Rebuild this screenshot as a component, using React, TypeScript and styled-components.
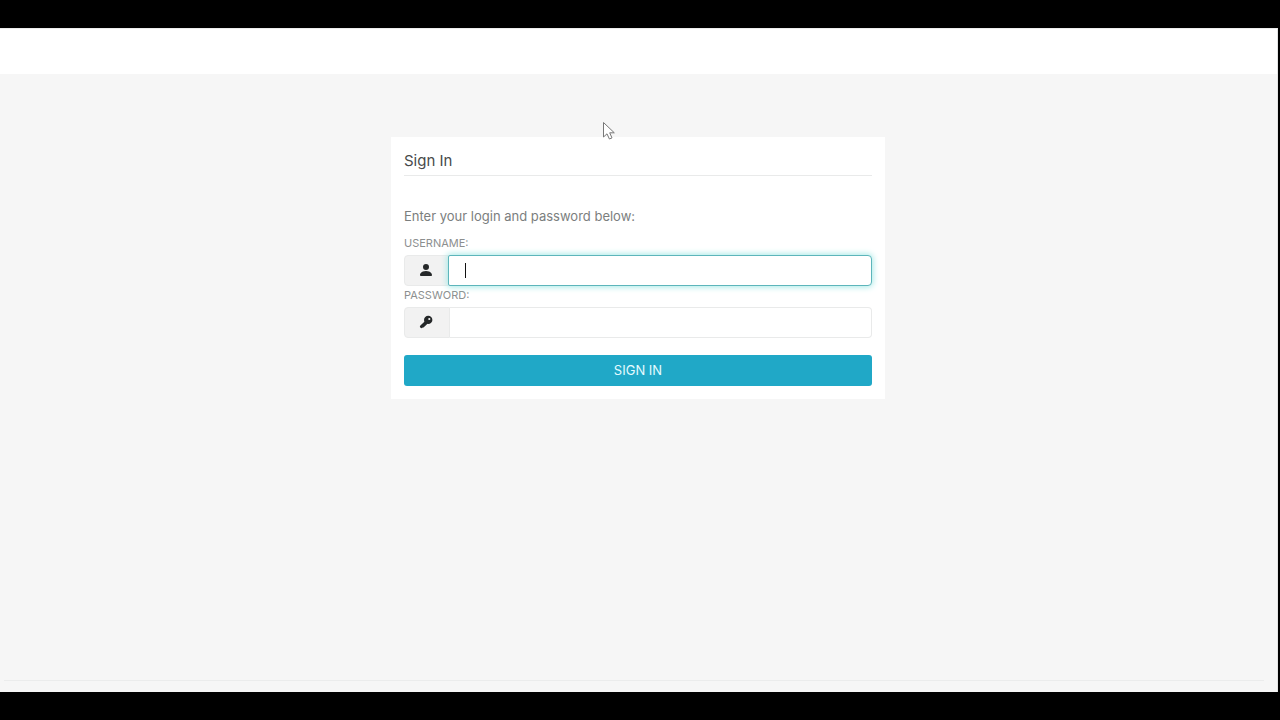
import React from "react";
import styled, { createGlobalStyle } from "styled-components";
import { BsPersonFill } from "react-icons/bs";

const GlobalStyle = createGlobalStyle`
  *, *::before, *::after { box-sizing: border-box; }
  body {
    margin: 0;
    background: #000;
    font-family: Inter, "Liberation Sans", sans-serif;
  }
`;

const Frame = styled.div`
  display: flex;
  flex-direction: column;
  min-height: 100vh;
  padding: 28px 2px 28px 0;
  background: #000;
`;

const Page = styled.div`
  flex: 1;
  display: flex;
  flex-direction: column;
  background: #f6f6f6;
  border-right: 1px solid #e4e5e5;
`;

const Header = styled.header`
  height: 46px;
  background: #fff;
  border-top: 1px solid #ececec;
`;

const Main = styled.main`
  flex: 1;
  padding: 63px 1px 24px 0;
`;

const Card = styled.section`
  width: 100%;
  max-width: 494px;
  margin: 0 auto;
  padding: 13px;
  background: #fff;
`;

const Title = styled.h1`
  margin: 0 0 30px;
  padding-bottom: 4px;
  border-bottom: 1px solid #e9eaea;
  font-size: 15px;
  font-weight: 400;
  line-height: 21px;
  color: #484a4b;
`;

const Intro = styled.p`
  margin: 0 0 8px;
  font-size: 13px;
  line-height: 20px;
  color: #7b7e7e;
`;

const Label = styled.label`
  display: block;
  padding: 1px 0 4px;
  font-size: 11px;
  line-height: 16px;
  color: #8c8f8f;
  text-transform: uppercase;
`;

const InputGroup = styled.div`
  position: relative;
  display: flex;
  height: 31px;
`;

const Addon = styled.span`
  display: flex;
  align-items: center;
  justify-content: center;
  width: 46px;
  padding: 0 2px 1px 0;
  background: #f2f2f2;
  border: 1px solid #e9eaea;
  border-radius: 4px 0 0 4px;
  color: #252829;
`;

const TextInput = styled.input`
  flex: 1;
  min-width: 0;
  padding: 0 16px;
  background: #fff;
  border: 1px solid #e9eaea;
  border-left: 0;
  border-radius: 0 4px 4px 0;
  font-family: inherit;
  font-size: 13px;
  color: #3f4243;
  outline: 0;

  &:focus {
    margin-left: -2px;
    border: 1px solid #5db5bb;
    border-radius: 2px 4px 4px 2px;
    box-shadow: 0 0 6px 1px #a5e9e6;
    caret-color: transparent;
  }
`;

const Caret = styled.span`
  position: absolute;
  left: 61px;
  top: 8px;
  width: 1px;
  height: 15px;
  background: #111;
  pointer-events: none;
  visibility: hidden;

  input:focus:placeholder-shown + & {
    visibility: visible;
  }
`;

const SubmitButton = styled.button`
  display: block;
  width: 100%;
  height: 31px;
  margin-top: 17px;
  padding: 0 0 2px;
  background: #20a8c7;
  border: 0;
  border-radius: 3px;
  font-family: inherit;
  font-size: 13px;
  line-height: 20px;
  color: #e5fbff;
  text-transform: uppercase;
  cursor: pointer;
`;

const Footer = styled.footer`
  height: 12px;
  margin: 0 13px 0 4px;
  border-top: 1px solid #ebecec;
`;

const Pointer = styled.svg`
  position: absolute;
  left: 602px;
  top: 121px;
  pointer-events: none;
`;

function KeyIcon() {
  return (
    <svg width="14" height="14" viewBox="0 0 14 14" aria-hidden>
      <path d="M7.2 7.2L2.4 11.6" stroke="currentColor" strokeWidth="3" strokeLinecap="round" />
      <path d="M4.2 11.6L7.4 8.6" stroke="currentColor" strokeWidth="1.6" strokeLinecap="round" />
      <circle cx="9.2" cy="4.9" r="4.2" fill="currentColor" />
      <circle cx="10.3" cy="4" r="1.1" fill="#f2f2f2" />
    </svg>
  );
}

export default function App() {
  return (
    <Frame>
      <GlobalStyle />
      <Page>
        <Header />
        <Main>
          <Card>
            <Title>Sign In</Title>
            <form onSubmit={(event) => event.preventDefault()}>
              <Intro>Enter your login and password below:</Intro>
              <Label htmlFor="username">Username:</Label>
              <InputGroup>
                <Addon>
                  <BsPersonFill size={16} aria-hidden />
                </Addon>
                <TextInput id="username" type="text" placeholder=" " autoComplete="username" autoFocus />
                <Caret />
              </InputGroup>
              <Label htmlFor="password">Password:</Label>
              <InputGroup>
                <Addon>
                  <KeyIcon />
                </Addon>
                <TextInput id="password" type="password" autoComplete="current-password" />
              </InputGroup>
              <SubmitButton type="submit">Sign In</SubmitButton>
            </form>
          </Card>
        </Main>
        <Footer />
      </Page>
      <Pointer width="14" height="20" viewBox="0 0 14 20" aria-hidden>
        <path
          d="M1.5 1.5V16L5 12.8L7.4 18L10 16.9L7.7 11.8H12.3Z"
          fill="#fff"
          stroke="#777"
          strokeWidth="1"
          strokeLinejoin="round"
        />
      </Pointer>
    </Frame>
  );
}
